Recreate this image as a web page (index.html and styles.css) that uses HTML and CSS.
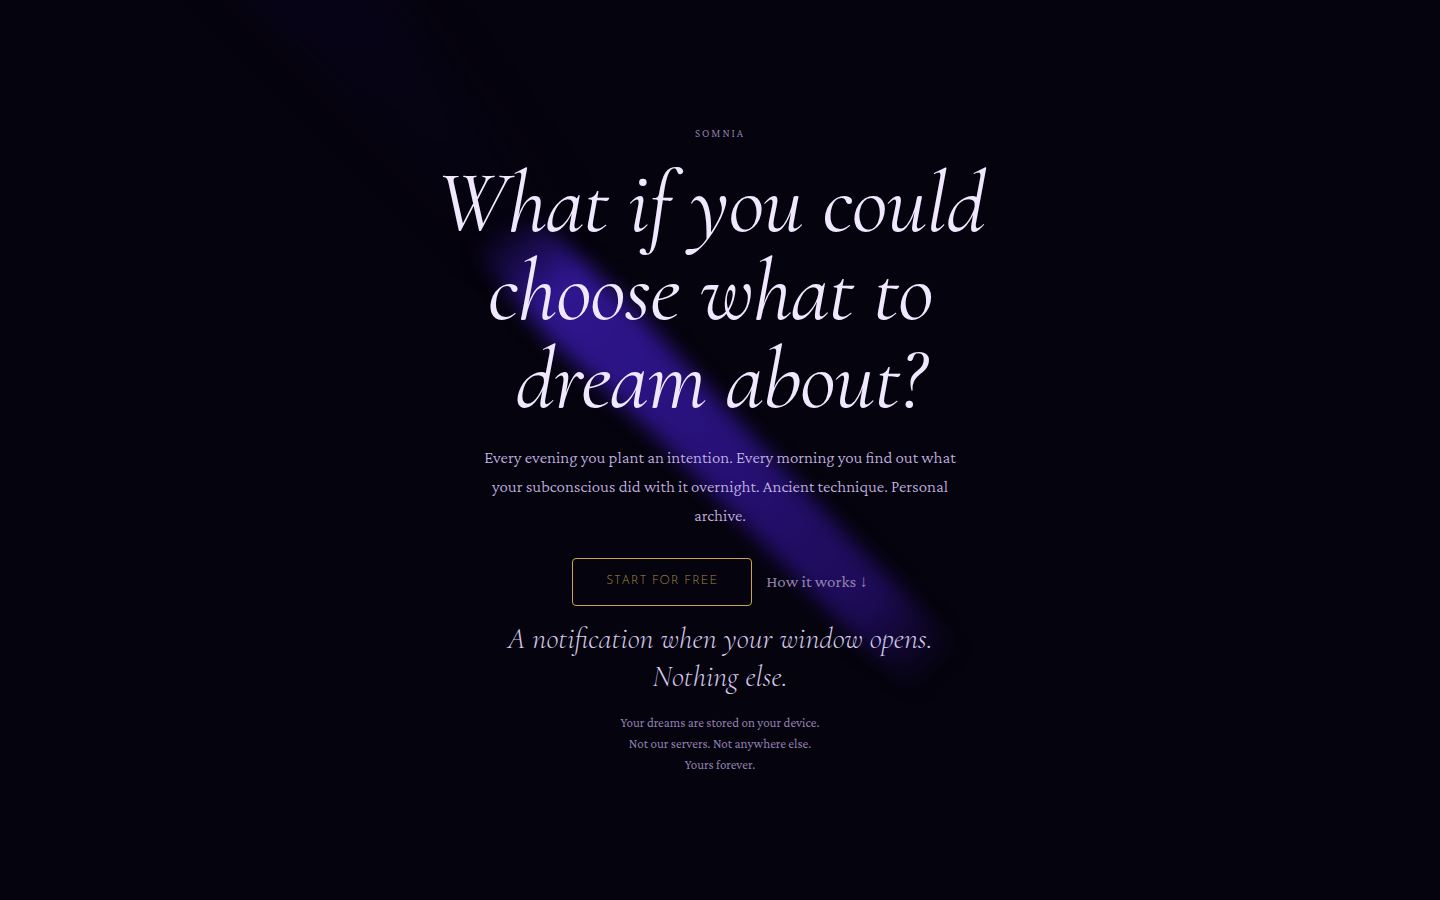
FILE: index.html
```html
<!DOCTYPE html>
<html lang="en">
<head>
<meta charset="utf-8">
<meta name="viewport" content="width=device-width, initial-scale=1">
<title>Somnia</title>
<link rel="stylesheet" href="styles.css">
</head>
<body>
<main class="hero">
  <svg class="beam" viewBox="0 0 1440 900" preserveAspectRatio="xMidYMid slice" aria-hidden="true">
    <defs>
      <linearGradient id="ray" gradientUnits="userSpaceOnUse" x1="495" y1="225" x2="940" y2="670">
        <stop offset="0" stop-color="#2f168f" stop-opacity="0"/>
        <stop offset="0.14" stop-color="#2f168f"/>
        <stop offset="0.5" stop-color="#271178"/>
        <stop offset="0.85" stop-color="#1c0b54"/>
        <stop offset="1" stop-color="#1c0b54" stop-opacity="0"/>
      </linearGradient>
      <linearGradient id="trail" gradientUnits="userSpaceOnUse" x1="250" y1="0" x2="500" y2="240">
        <stop offset="0" stop-color="#070319"/>
        <stop offset="1" stop-color="#05030f"/>
      </linearGradient>
      <filter id="soft" filterUnits="userSpaceOnUse" x="0" y="0" width="1440" height="900" color-interpolation-filters="sRGB">
        <feGaussianBlur stdDeviation="10"/>
      </filter>
      <filter id="haze" filterUnits="userSpaceOnUse" x="-100" y="-100" width="1640" height="1100" color-interpolation-filters="sRGB">
        <feGaussianBlur stdDeviation="20"/>
      </filter>
    </defs>
    <path d="M190 -60L360 -60L560 220L500 250Z" fill="url(#trail)" filter="url(#haze)"/>
    <path d="M455 230L545 225L640 315L742 425L842 530L965 655L925 700L840 622L655 435L550 340Z" fill="url(#ray)" filter="url(#soft)"/>
  </svg>
  <div class="content">
    <p class="brand">SOMNIA</p>
    <h1 class="title">What if you could&nbsp;<br>choose what to&nbsp;<br>dream about?</h1>
    <p class="lead">Every evening you plant an intention. Every morning you find out what<br>your subconscious did with it overnight. Ancient technique. Personal<br>archive.</p>
    <div class="actions">
      <button class="start" type="button">START FOR FREE</button>
      <a class="how" href="#how">How it works ↓</a>
    </div>
    <p class="promise">A notification when your window opens.<br>Nothing else.</p>
    <p class="privacy">Your dreams are stored on your device.<br>Not our servers. Not anywhere else.<br>Yours forever.</p>
  </div>
</main>
</body>
</html>
```
FILE: styles.css
```css
* {
  box-sizing: border-box;
  margin: 0;
}

body {
  background: #05030d;
  color: #f0e8ff;
  font-family: "Crimson Pro", "Liberation Serif", serif;
  font-weight: 400;
}

.hero {
  position: relative;
  display: flex;
  align-items: center;
  justify-content: center;
  min-height: 100vh;
  padding: 24px;
  overflow: hidden;
}

.beam {
  position: absolute;
  inset: 0;
  width: 100%;
  height: 100%;
}

.content {
  position: relative;
  display: flex;
  flex-direction: column;
  align-items: center;
  text-align: center;
}

.brand {
  font-size: 11px;
  font-weight: 300;
  line-height: 16px;
  letter-spacing: 2px;
  color: #9c8cbc;
}

.title {
  margin-top: 18px;
  font-family: "Cormorant Garamond", "Liberation Serif", serif;
  font-size: 88px;
  font-style: italic;
  font-weight: 400;
  line-height: 88px;
  letter-spacing: -0.01em;
}

.lead {
  margin-top: 20px;
  font-size: 17px;
  font-weight: 300;
  line-height: 29px;
  color: #c4b4e0;
}

.actions {
  display: flex;
  align-items: center;
  gap: 14px;
  margin-top: 28px;
}

.start {
  width: 180px;
  height: 48px;
  padding: 0 0 2px;
  border: 1px solid #c9a84c;
  border-radius: 4px;
  background: #05030d;
  color: #a88c40;
  font-family: "Josefin Sans", Lato, sans-serif;
  font-size: 12px;
  font-weight: 300;
  letter-spacing: 1px;
}

.how {
  font-size: 17px;
  color: #9080b0;
  text-decoration: none;
}

.promise {
  margin-top: 14px;
  font-family: "Cormorant Garamond", "Liberation Serif", serif;
  font-size: 30px;
  font-style: italic;
  font-weight: 300;
  line-height: 38px;
  color: #d4c8e8;
}

.privacy {
  margin-top: 16px;
  font-size: 13px;
  line-height: 21px;
  color: #9080b0;
}
```
